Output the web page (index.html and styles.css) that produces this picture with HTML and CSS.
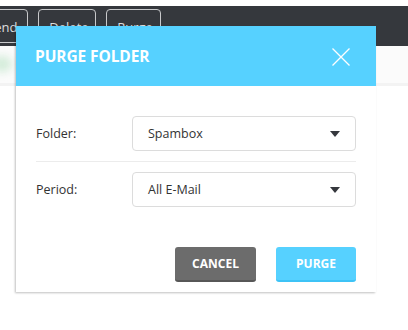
FILE: index.html
```html
<!DOCTYPE html>
<html>
<head>
<meta charset="utf-8">
<link rel="stylesheet" href="styles.css">
</head>
<body>
<div class="page">
  <div class="toolbar">
    <span class="tb-btn tb-send">Send</span>
    <span class="tb-btn">Delete</span>
    <span class="tb-btn">Purge</span>
  </div>
  <div class="content">
    <div class="row-head"><span class="blob"></span></div>
  </div>

  <div class="modal">
    <div class="modal-header">
      <span class="modal-title">PURGE FOLDER</span>
      <svg class="close" width="18" height="18" viewBox="0 0 18 18"><path d="M0.5 0.5L17.5 17.5M17.5 0.5L0.5 17.5" stroke="#fff" stroke-width="1.3" fill="none"/></svg>
    </div>
    <div class="modal-body">
      <div class="field field-first">
        <span class="label">Folder:</span>
        <div class="select"><span>Spambox</span><span class="caret"></span></div>
      </div>
      <div class="field field-second">
        <span class="label">Period:</span>
        <div class="select"><span>All E-Mail</span><span class="caret"></span></div>
      </div>
    </div>
    <div class="modal-footer">
      <button class="btn btn-cancel">CANCEL</button>
      <button class="btn btn-purge">PURGE</button>
    </div>
  </div>
</div>
</body>
</html>
```
FILE: styles.css
```css
* { box-sizing: border-box; }
html, body { margin: 0; padding: 0; background: #fff; }
body { font-family: "Open Sans", "Liberation Sans", sans-serif; }
.page { position: relative; width: 408px; height: 330px; overflow: hidden; padding-top: 6px; }
.toolbar {
  height: 40px; background: #35383d; display: flex; gap: 10px;
  padding: 3px 0 0 0; margin-left: -24px;
}
.tb-btn {
  display: inline-block; height: 34px; padding: 0 10px; border: 1px solid #c8c9cb;
  border-radius: 4px; color: #ddd; font-size: 13px; line-height: 34px;
}
.tb-btn:nth-child(2) { width: 58px; }
.tb-btn:nth-child(3) { width: 55px; }
.content { height: 40px; background: #fbfbfb; border-bottom: 3px solid #f3f3f3; position: relative; }
.blob { position: absolute; left: -8px; top: 10px; width: 20px; height: 16px; border-radius: 50%; background: #d3ecd9; filter: blur(4px); }

.modal {
  position: absolute; left: 16px; top: 26px; width: 360px; height: 266px;
  background: #fff; box-shadow: -1px 1px 2px rgba(0,0,0,0.25);
  display: flex; flex-direction: column;
}
.modal-header {
  height: 60px; background: #56d1ff; display: flex; align-items: center;
  justify-content: space-between; padding: 0 26px 0 19px;
}
.modal-title { color: #fff; font-weight: 700; font-size: 15.5px; letter-spacing: -0.1px; }
.close { display: block; margin-top: 2px; }
.modal-body { padding: 30px 20px 0 20px; }
.field { display: flex; align-items: center; }
.field-first { padding-bottom: 10px; border-bottom: 1px solid #ececec; }
.field-second { margin-top: 10px; }
.label { width: 96px; font-size: 12.5px; color: #333; }
.select {
  flex: 1; height: 35px; border: 1px solid #dcdcdc; border-radius: 4px;
  display: flex; align-items: center; justify-content: space-between; padding: 0 15px 0 15px;
  font-size: 12.5px; color: #333;
}
.caret { width: 0; height: 0; border-left: 5px solid transparent; border-right: 5px solid transparent; border-top: 6px solid #35383d; }
.modal-footer { display: flex; justify-content: flex-end; gap: 20px; padding: 40px 20px 0 0; }
.btn {
  height: 35px; border: 0; border-radius: 3px; color: #fff; font-family: inherit;
  font-weight: 700; font-size: 12px; padding: 0; cursor: pointer;
}
.btn-cancel { width: 81px; background: #6c6c6c; border-bottom: 2px solid #575757; }
.btn-purge { width: 80px; background: #56d1ff; border-bottom: 2px solid #3ec3f6; }
```
